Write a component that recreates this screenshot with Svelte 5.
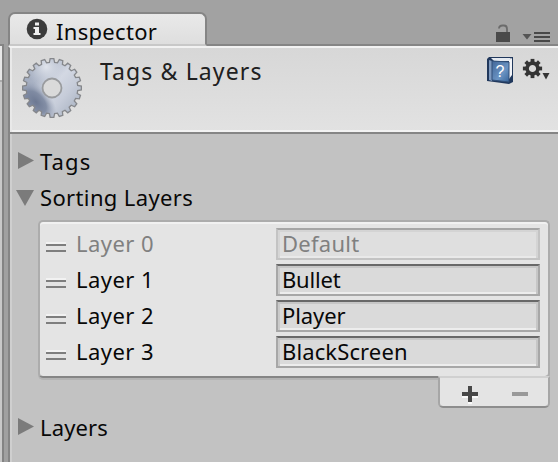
<script>
  const layers = [
    { label: 'Layer 0', value: 'Default', locked: true, tracking: 0.25 },
    { label: 'Layer 1', value: 'Bullet', tracking: -0.2 },
    { label: 'Layer 2', value: 'Player', tracking: -0.1 },
    { label: 'Layer 3', value: 'BlackScreen', tracking: 0.12 }
  ];

  // Outline of the large gear: 20 teeth around a 30px centre.
  const teeth = 20;
  const gear = Array.from({ length: teeth }, (_, i) =>
    [[-0.32, 25.8], [-0.2, 29.4], [0.2, 29.4], [0.32, 25.8]]
      .map(([o, r]) => {
        const a = ((i + o) / teeth) * Math.PI * 2 - Math.PI / 2;
        return `${(30 + r * Math.cos(a)).toFixed(2)},${(30 + r * Math.sin(a)).toFixed(2)}`;
      })
      .join(' ')
  ).join(' ');
</script>

<div class="window">
  <div class="gutter"><div class="neighbour"></div><div class="divider"></div></div>
  <div class="panel">
    <div class="tabs">
      <div class="tab">
        <svg width="22" height="22" viewBox="0 0 22 22">
          <circle cx="11" cy="11" r="10.3" fill="#3c3c3c" />
          <path d="M9 4.500h4v3H9zM7.500 9H13v6h1.500v2h-7v-2H9v-4H7.500z" fill="#f0f0f0" />
        </svg>
        <span>Inspector</span>
      </div>
      <svg class="tools" width="64" height="24" viewBox="0 0 64 24">
        <path d="M5 5.500Q5 2.500 8.500 2.500H10Q13 2.500 13 6V9" fill="none" stroke="#6b6b6b" stroke-width="1.800" />
        <path d="M2 9h14v10H2z" fill="#4a4a4a" />
        <path d="M28.500 11h9l-4.500 5.500z" fill="#555" />
        <path d="M40 10h16M40 14h16M40 18h16" stroke="#484848" stroke-width="2" />
      </svg>
    </div>
    <header>
      <svg class="gear" width="60" height="60" viewBox="0 0 60 60">
        <defs>
          <linearGradient id="steel" x1="0.08" y1="0.12" x2="0.92" y2="0.82">
            <stop offset="0" stop-color="#a0aabd" />
            <stop offset="0.26" stop-color="#aab3c5" />
            <stop offset="0.52" stop-color="#d3d8e3" />
            <stop offset="0.75" stop-color="#c6ccd9" />
            <stop offset="1" stop-color="#aeb7c6" />
          </linearGradient>
          <radialGradient id="shade" gradientUnits="userSpaceOnUse" cx="0" cy="0" r="1" gradientTransform="translate(14 44) rotate(48) scale(26 15)">
            <stop offset="0" stop-color="#6c7892" />
            <stop offset="0.5" stop-color="#76829b" stop-opacity="0.85" />
            <stop offset="1" stop-color="#98a2b6" stop-opacity="0" />
          </radialGradient>
          <radialGradient id="shine" cx="0.4" cy="0.14" r="0.34">
            <stop offset="0" stop-color="#e0e4ec" />
            <stop offset="1" stop-color="#d5dae4" stop-opacity="0" />
          </radialGradient>
        </defs>
        <polygon points={gear} fill="url(#steel)" />
        <polygon points={gear} fill="url(#shade)" />
        <polygon points={gear} fill="url(#shine)" stroke="#85878b" stroke-width="1.3" />
        <circle cx="30" cy="30" r="9.500" fill="#dadada" stroke="#999b9e" stroke-width="1.8" />
      </svg>
      <h1>Tags &amp; Layers</h1>
      <svg class="actions" width="66" height="30" viewBox="0 0 66 30">
        <defs>
          <linearGradient id="cover" x1="0" y1="0" x2="1" y2="1">
            <stop offset="0" stop-color="#426799" />
            <stop offset="0.6" stop-color="#6b94c3" />
            <stop offset="1" stop-color="#38659b" />
          </linearGradient>
        </defs>
        <path d="M3 1h24v25l-4 2L1 25V3z" fill="#21385c" />
        <path d="M3 4l3 1v20l-3-1z" fill="#7f9abf" />
        <path d="M5 2h20l-2 3H8z" fill="#e5eaf1" />
        <path d="M23 4l3-2v17l-3 4z" fill="#f2f4f8" />
        <path d="M6 5l17 1v20L6 24z" fill="url(#cover)" stroke="#304f79" />
        <text x="9.500" y="20.500" class="help">?</text>
        <g transform="translate(46.500 12.500)" fill="#343434">
          {#each [0, 45, 90, 135, 180, 225, 270, 315] as angle}
            <rect x="-1.900" y="-9.600" width="3.800" height="5" transform="rotate({angle})" />
          {/each}
          <circle r="5.400" fill="none" stroke="#343434" stroke-width="3.600" />
        </g>
        <path d="M56.500 17h7l-3.500 6.500z" fill="#343434" />
      </svg>
    </header>
    <main>
      <div class="fold"><svg width="20" height="20"><path d="M2 1L18 9.500L2 18z" /></svg><span class="tags">Tags</span></div>
      <div class="fold"><svg width="20" height="20"><path d="M0 3H18L9 19z" /></svg><span class="sorting">Sorting Layers</span></div>
      <section>
        <div class="list">
          {#each layers as layer}
            <div class="row" class:locked={layer.locked}>
              <i class="grip"></i>
              <span class="label">{layer.label}</span>
              <div class="field" style="letter-spacing: {layer.tracking}px">{layer.value}</div>
            </div>
          {/each}
        </div>
        <div class="footer">
          <svg width="108" height="28" viewBox="0 0 108 28">
            <path d="M22 17h16M30 9v16" stroke="#fafafa" stroke-width="4" transform="translate(0 1)" />
            <path d="M22 16h16M30 8v16" stroke="#484848" stroke-width="4" />
            <path d="M72 16h16" stroke="#999" stroke-width="4" />
          </svg>
        </div>
      </section>
      <div class="fold"><svg width="20" height="20"><path d="M2 1L18 9.500L2 18z" /></svg><span>Layers</span></div>
    </main>
  </div>
</div>

<style>
  :global(body) { margin: 0; }
  * { box-sizing: border-box; }
  .window {
    width: 558px; height: 462px; display: flex; overflow: hidden;
    background: #a2a2a2; color: #080808;
    font: 22px/36px "Noto Sans", "Open Sans", sans-serif; white-space: nowrap;
  }
  svg { display: block; flex: none; }
  .gutter { width: 8px; display: flex; padding-top: 44px; flex: none; }
  .neighbour { width: 4px; border-right: 2px solid #838383; border-top: 2px solid #858585; background: linear-gradient(#e7e7e7 0 34px, #aaa 34px 36px, #c8c8c8 36px); }
  .divider { flex: 1; background: #a0a0a0; }
  .panel { flex: 1; display: flex; flex-direction: column; min-width: 0; }
  .tabs { height: 46px; flex: none; display: flex; justify-content: space-between; padding-top: 12px; border-bottom: 2px solid #858585; }
  .tab {
    width: 199px; height: 34px; display: flex; padding: 4px 0 0 16px;
    border: 2px solid #858585; border-bottom-color: #c8c8c8; border-radius: 7px 7px 0 0;
    background: linear-gradient(#e9e9e9, #dedede);
  }
  .tab span { margin: -5px 0 0 8px; letter-spacing: .3px; }
  .tools { margin: 11px 0 0; }
  header {
    height: 88px; flex: none; display: flex; align-items: flex-start;
    border-left: 2px solid #858585; border-top: 2px solid #f2f2f2; border-bottom: 2px solid #858585;
    box-shadow: inset 2px 0 #e9e9e9, inset 0 -2px #f2f2f2;
    background: linear-gradient(#d7d7d7, #e2e2e2); padding: 10px 0 0 12px;
  }
  h1 { flex: 1; margin: -5px 0 0 18px; font-size: 23px; font-weight: 400; line-height: 36px; color: #202020; letter-spacing: 1.12px; }
  .actions { margin: -2px 6px 0 0; }
  .help { font: 16px "Liberation Sans", sans-serif; fill: #fff; }
  main { flex: 1; background: #c2c2c2; border-left: 2px solid #858585; box-shadow: inset 2px 0 #cfcfcf; padding: 10px 8px 0 6px; }
  .fold { height: 36px; display: flex; align-items: center; gap: 4px; fill: #7b7b7b; }
  .fold svg { margin-top: -2px; }
  .fold span { margin-top: -2px; letter-spacing: .15px; }
  .fold .sorting { letter-spacing: .36px; }
  .fold .tags { letter-spacing: 1.1px; }
  section { display: flex; flex-direction: column; align-items: flex-end; height: 194px; padding-top: 4px; }
  .list {
    width: 512px; height: 158px; flex: none; padding: 4px 8px 0 6px;
    border: 2px solid #acacac; border-bottom-color: #858585; border-radius: 5px;
    background: #e4e4e4; box-shadow: inset 0 2px #f1f1f1, 0 2px #b3b3b3;
  }
  .row { height: 36px; display: flex; align-items: center; }
  .grip { width: 20px; height: 8px; margin-top: 8px; border: solid #7e7e7e; border-width: 2px 0; box-shadow: 0 -2px #f2f2f2; flex: none; }
  .label { margin: -2px 0 0 10px; width: 200px; letter-spacing: .45px; }
  .field {
    width: 264px; height: 32px; padding-left: 4px; line-height: 26px;
    border: 2px solid #a7a7a7; border-top-color: #686868;
    background: #dadada; box-shadow: inset 0 2px #c6c6c6, inset 2px 0 #cacaca, inset -2px 0 #c6c6c6, inset 0 -2px #ededed;
  }
  .locked .label, .locked .field { color: #808080; }
  .locked .field { border-color: #c3c3c3; border-top-color: #a5a5a5; background: #dfdfdf; box-shadow: inset 0 2px #d4d4d4, inset 2px 0 #d5d5d5, inset -2px 0 #d4d4d4, inset 0 -2px #e9e9e9; }
  .footer {
    width: 112px; height: 32px; margin-top: -2px; position: relative;
    border: 2px solid #a6a6a6; border-top-color: #d0d0d0; border-bottom-color: #8d8d8d;
    border-radius: 0 0 5px 5px; background: #e4e4e4;
  }
</style>
